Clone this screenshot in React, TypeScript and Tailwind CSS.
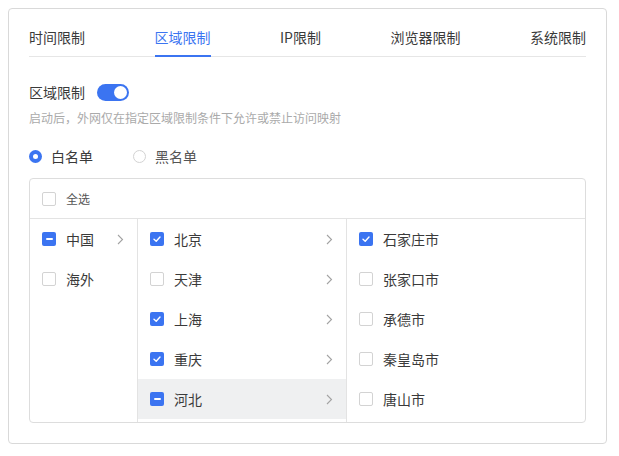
import React from "react";

const BLUE = "#3b74f1";

type CheckState = "on" | "off" | "mixed";

const Check = ({ state }: { state: CheckState }) => {
  if (state === "off") {
    return <span className="w-[14px] h-[14px] shrink-0 rounded-[2px] border border-[#d3d3d3] bg-white" />;
  }
  return (
    <span className="w-[14px] h-[14px] shrink-0 rounded-[2px] bg-[#3b74f1] flex items-center justify-center">
      {state === "on" ? (
        <svg width="10" height="10" viewBox="0 0 10 10">
          <path d="M2 5.2 L4.2 7.2 L8 3" fill="none" stroke="#fff" strokeWidth="1.4" strokeLinecap="round" strokeLinejoin="round" />
        </svg>
      ) : (
        <span className="w-[7px] h-[2px] bg-white rounded-[1px]" />
      )}
    </span>
  );
};

const Arrow = () => (
  <svg width="7" height="11" viewBox="0 0 7 11" className="shrink-0">
    <path d="M1 1 L5.5 5.5 L1 10" fill="none" stroke="#a3a3a3" strokeWidth="1.1" />
  </svg>
);

type Item = { label: string; state: CheckState; arrow?: boolean; active?: boolean };

const Row = ({ item }: { item: Item }) => (
  <div className={`h-[40px] flex items-center pl-3 pr-[13px] gap-[10px] ${item.active ? "bg-[#eff0f1]" : ""}`}>
    <Check state={item.state} />
    <span className="flex-1 text-[14px] text-[#3a3a3a]">{item.label}</span>
    {item.arrow && <Arrow />}
  </div>
);

const tabs = ["时间限制", "区域限制", "IP限制", "浏览器限制", "系统限制"];

const countries: Item[] = [
  { label: "中国", state: "mixed", arrow: true },
  { label: "海外", state: "off" },
];

const provinces: Item[] = [
  { label: "北京", state: "on", arrow: true },
  { label: "天津", state: "off", arrow: true },
  { label: "上海", state: "on", arrow: true },
  { label: "重庆", state: "on", arrow: true },
  { label: "河北", state: "mixed", arrow: true, active: true },
];

const cities: Item[] = [
  { label: "石家庄市", state: "on" },
  { label: "张家口市", state: "off" },
  { label: "承德市", state: "off" },
  { label: "秦皇岛市", state: "off" },
  { label: "唐山市", state: "off" },
];

export default function App() {
  return (
    <div
      className="w-[619px] h-[456px] bg-white pt-2 pl-2 pr-3"
      style={{ fontFamily: '"Noto Sans CJK SC", "Noto Sans", sans-serif' }}
    >
      <div className="h-[436px] border border-[#d9d9d9] rounded-[4px] pt-4 px-5">
        {/* tabs */}
        <div className="flex justify-between h-[32px] border-b border-[#e6e6e6]">
          {tabs.map((t, i) => (
            <div
              key={t}
              className={`h-[32px] leading-[24px] text-[14px] border-b-2 ${
                i === 1 ? "border-[#3b74f1] text-[#3b74f1]" : "border-transparent text-[#3a3a3a]"
              }`}
            >
              {t}
            </div>
          ))}
        </div>

        <div className="mt-6 flex items-center h-[22px]">
          <span className="text-[14px] text-[#3a3a3a] leading-[22px]">区域限制</span>
          <span className="ml-3 w-8 h-[17px] rounded-full bg-[#3b74f1] flex items-center justify-end pr-[2px]">
            <span className="w-[13px] h-[13px] rounded-full bg-white" />
          </span>
        </div>
        <div className="mt-[5px] text-[12px] leading-[20px] text-[#aaaaaa]">
          启动后，外网仅在指定区域限制条件下允许或禁止访问映射
        </div>

        <div className="mt-[18px] flex items-center h-[20px] text-[14px] text-[#3a3a3a]">
          <span className="w-[13px] h-[13px] rounded-full flex items-center justify-center" style={{ background: BLUE }}>
            <span className="w-[5px] h-[5px] rounded-full bg-white" />
          </span>
          <span className="ml-[9px]">白名单</span>
          <span className="ml-[40px] w-[13px] h-[13px] rounded-full border border-[#d3d3d3]" />
          <span className="ml-[9px] text-[#555]">黑名单</span>
        </div>

        {/* transfer */}
        <div className="mt-3 border border-[#dddddd] rounded-[4px] overflow-hidden">
          <div className="h-[40px] border-b border-[#e3e3e3] flex items-center pl-3 gap-[10px]">
            <Check state="off" />
            <span className="text-[12px] text-[#555]">全选</span>
          </div>
          <div className="flex h-[203px]">
            <div className="w-[108px] border-r border-[#e3e3e3]">
              {countries.map((c) => (
                <Row key={c.label} item={c} />
              ))}
            </div>
            <div className="w-[209px] border-r border-[#e3e3e3]">
              {provinces.map((c) => (
                <Row key={c.label} item={c} />
              ))}
            </div>
            <div className="flex-1">
              {cities.map((c) => (
                <Row key={c.label} item={c} />
              ))}
            </div>
          </div>
        </div>
      </div>
    </div>
  );
}
